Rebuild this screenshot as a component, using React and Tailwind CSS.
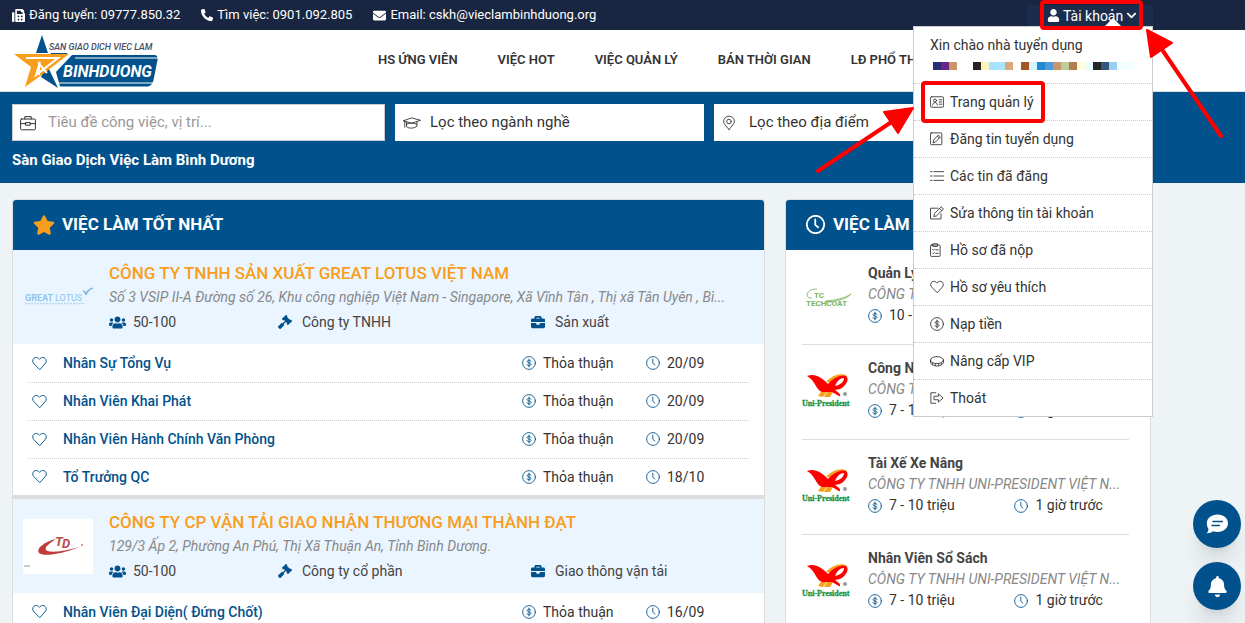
import { FaBell, FaBriefcase, FaChevronDown, FaEnvelope, FaFax, FaGavel, FaPhoneAlt, FaStar, FaUser, FaUsers } from 'react-icons/fa'

const nav = ['HS ứng viên', 'Việc hot', 'Việc quản lý', 'Bán thời gian', 'LĐ phổ thông']

const menu = [
  ['card', 'Trang quản lý'],
  ['penSquare', 'Đăng tin tuyển dụng'],
  ['list', 'Các tin đã đăng'],
  ['edit', 'Sửa thông tin tài khoản'],
  ['clipboard', 'Hồ sơ đã nộp'],
  ['heart', 'Hồ sơ yêu thích'],
  ['dollar', 'Nạp tiền'],
  ['ring', 'Nâng cấp VIP'],
  ['exit', 'Thoát'],
]

const companies = [
  {
    name: 'CÔNG TY TNHH SẢN XUẤT GREAT LOTUS VIỆT NAM',
    address: 'Số 3 VSIP II-A Đường số 26, Khu công nghiệp Việt Nam - Singapore, Xã Vĩnh Tân , Thị xã Tân Uyên , Bì...',
    size: '50-100',
    type: 'Công ty TNHH',
    field: 'Sản xuất',
    Logo: LotusLogo,
    jobs: [
      ['Nhân Sự Tổng Vụ', '20/09'],
      ['Nhân Viên Khai Phát', '20/09'],
      ['Nhân Viên Hành Chính Văn Phòng', '20/09'],
      ['Tổ Trưởng QC', '18/10'],
    ],
  },
  {
    name: 'CÔNG TY CP VẬN TẢI GIAO NHẬN THƯƠNG MẠI THÀNH ĐẠT',
    address: '129/3 Ấp 2, Phường An Phú, Thị Xã Thuận An, Tỉnh Bình Dương.',
    size: '50-100',
    type: 'Công ty cổ phần',
    field: 'Giao thông vận tải',
    Logo: ThanhDatLogo,
    jobs: [['Nhân Viên Đại Diện( Đứng Chốt)', '16/09']],
  },
]

const latest = [
  ['Quản Lý Sản Xuất', 'CÔNG TY TNHH TECHCOAT VIỆT NAM', '10 - 15 triệu', TechcoatLogo],
  ['Công Nhân Sản Xuất', 'CÔNG TY TNHH UNI-PRESIDENT VIỆT N...', '7 - 10 triệu', UniLogo],
  ['Tài Xế Xe Nâng', 'CÔNG TY TNHH UNI-PRESIDENT VIỆT N...', '7 - 10 triệu', UniLogo],
  ['Nhân Viên Sổ Sách', 'CÔNG TY TNHH UNI-PRESIDENT VIỆT N...', '7 - 10 triệu', UniLogo],
]

// hidden name under the greeting, 8px blocks
const mosaic = [
  '#2b2d77', '#6a2589', '#c89468', '#fff', '#fff', '#2a2222', '#fff3b8', '#a6e2fc', '#a6e6ff',
  '#dba87c', '#fff', '#a55522', '#d2f6ff', '#2388d4', '#4b9bdc', '#c89468', '#b8cf98', '#b07c50',
  '#ffffe0', '#e8ffff', '#222428', '#36557c', '#9bccf2', '#f2ffff', '#f2ffff',
]

export default function App() {
  return (
    <div className="relative h-screen overflow-hidden bg-[#eef3f6] font-[Roboto,sans-serif] text-sm text-[#333]">
      <TopBar />
      <Header />
      <SearchBand />
      <main className="grid grid-cols-[753fr_366fr] items-start gap-5 pt-4 pr-[94px] pl-3">
        <BestJobs />
        <LatestJobs />
      </main>
      <FloatingButtons />
      <Annotations />
    </div>
  )
}

function TopBar() {
  return (
    <div className="flex h-[30px] items-center bg-[#192641] pr-[92px] pl-3 text-[13px] text-white">
      <span className="flex items-center gap-1"><FaFax className="size-[13px]" />Đăng tuyển: 09777.850.32</span>
      <span className="ml-[21px] flex items-center gap-1"><FaPhoneAlt className="size-3" />Tìm việc: 0901.092.805</span>
      <span className="ml-[21px] flex items-center gap-1"><FaEnvelope className="size-[13px]" />Email: cskh@vieclambinhduong.org</span>
      <div className="relative ml-auto self-end">
        <button className="flex h-[25px] w-[126px] items-center gap-[3px] bg-[#1b2d4c] pb-1 pl-5 text-sm">
          <FaUser className="size-[13px]" />Tài khoản<FaChevronDown className="size-[11px]" />
        </button>
        <AccountMenu />
      </div>
    </div>
  )
}

function AccountMenu() {
  return (
    <div className="absolute top-[21px] right-0 z-20 w-[240px] border border-[#ccc] bg-white text-sm text-[#333]">
      <svg className="absolute -top-[9px] right-[30px] h-[9px] w-[18px]" viewBox="0 0 18 9">
        <path d="M0 9 9 0l9 9z" fill="#fff" />
      </svg>
      <div className="px-4 pt-2 pb-[13px]">
        <p className="leading-5">Xin chào nhà tuyển dụng</p>
        <div className="mt-[7px] flex pl-[3px]">
          {mosaic.map((c, i) => (
            <span key={i} className="size-2" style={{ background: c }} />
          ))}
        </div>
      </div>
      {menu.map(([icon, label]) => (
        <a key={label} href="#" className="flex h-[37px] items-center border-t border-dotted border-[#ccc] px-4">
          <span className="w-5"><Icon name={icon} className="size-[14px]" /></span>
          {label}
        </a>
      ))}
    </div>
  )
}

function Header() {
  return (
    <header className="flex h-[62px] items-center border-b border-[#ddd] bg-white pl-3">
      <a href="#" className="w-[366px] shrink-0"><SiteLogo /></a>
      <nav className="flex gap-10">
        {nav.map((n) => (
          <a key={n} href="#" className="text-[13px] font-semibold whitespace-nowrap uppercase">{n}</a>
        ))}
      </nav>
    </header>
  )
}

function SearchBand() {
  return (
    <section className="h-[91px] bg-[#01528c] pt-3 pr-[94px] pl-3">
      <div className="grid grid-cols-[373fr_309fr_437fr] gap-[10px]">
        <label className="flex h-[37px] items-center border border-[#ccc] bg-white pl-[7px]">
          <Icon name="briefcase" className="size-4 shrink-0" />
          <input
            aria-label="Tiêu đề công việc"
            placeholder="Tiêu đề công việc, vị trí..."
            className="ml-3 w-full text-[15px] outline-none placeholder:text-[#999]"
          />
        </label>
        <Filter icon="cap" label="Lọc theo ngành nghề" size="w-[18px]" />
        <Filter icon="pin" label="Lọc theo địa điểm" size="w-[14px]" />
      </div>
      <h1 className="mt-2 text-[15px] leading-[22px] font-bold text-white">Sàn Giao Dịch Việc Làm Bình Dương</h1>
    </section>
  )
}

function Filter({ icon, label, size }) {
  return (
    <label className="flex h-[37px] items-center bg-white pl-2">
      <span className="w-[27px]"><Icon name={icon} className={`h-4 ${size}`} /></span>
      <select aria-label={label} className="w-[180px] appearance-none text-[15px] outline-none">
        <option>{label}</option>
      </select>
    </label>
  )
}

function CardTitle({ icon, children }) {
  return (
    <div className="flex h-[50px] items-center bg-[#01528c] pb-px pl-5 text-[17px] font-bold text-white">
      {icon}
      <h2>{children}</h2>
    </div>
  )
}

function BestJobs() {
  return (
    <section className="overflow-hidden rounded-t border border-[#ddd] bg-white">
      <CardTitle icon={<FaStar className="mr-[7px] size-[22px] text-[#f99d1c]" />}>VIỆC LÀM TỐT NHẤT</CardTitle>
      {companies.map((c) => (
        <article key={c.name} className="border-b-4 border-[#ddd]">
          <div className="flex items-center gap-4 bg-[#eaf5ff] pt-[11px] pr-4 pb-[10px] pl-[10px]">
            <c.Logo />
            <div className="min-w-0 flex-1">
              <a href="#" className="block truncate text-[17px] leading-6 font-medium text-[#f99d1c]">{c.name}</a>
              <p className="truncate leading-[25px] text-[#888] italic">{c.address}</p>
              <div className="grid grid-cols-[169fr_253fr_217fr] leading-6 text-[#444]">
                <Meta icon={<FaUsers className="size-[17px]" />}>{c.size}</Meta>
                <Meta icon={<FaGavel className="size-[14px]" />}>{c.type}</Meta>
                <Meta icon={<FaBriefcase className="size-[14px]" />}>{c.field}</Meta>
              </div>
            </div>
          </div>
          <ul className="mx-[15px] pt-px">
            {c.jobs.map(([title, date]) => (
              <li key={title} className="flex h-[38px] items-center border-b border-dotted border-[#ccc] pb-px pl-1 last:h-9 last:border-0">
                <button aria-label="Lưu việc làm" className="w-[31px] text-[#01528c]"><Icon name="heart" className="size-[15px]" /></button>
                <a href="#" className="flex-1 font-medium text-[#01528c]">{title}</a>
                <span className="flex w-[124px] items-center gap-[7px]"><Icon name="dollar" className="size-[14px] text-[#01528c]" />Thỏa thuận</span>
                <span className="flex w-[103px] items-center gap-[7px]"><Icon name="clock" className="size-[14px] text-[#01528c]" />{date}</span>
              </li>
            ))}
          </ul>
        </article>
      ))}
    </section>
  )
}

function Meta({ icon, children }) {
  return (
    <span className="flex items-center">
      <span className="w-6 text-[#01528c]">{icon}</span>
      {children}
    </span>
  )
}

function LatestJobs() {
  return (
    <section className="overflow-hidden rounded-t border border-[#ddd] bg-white">
      <CardTitle icon={<Icon name="clock" className="mr-2 size-[19px]" bold />}>VIỆC LÀM MỚI NHẤT</CardTitle>
      <ul className="pr-[21px] pl-4">
        {latest.map(([title, company, pay, Logo]) => (
          <li key={title} className="flex h-[95px] items-center gap-4 border-b border-[#ddd]">
            <Logo />
            <div className="min-w-0 flex-1 pb-[5px] leading-[21px]">
              <a href="#" className="block font-bold text-[#444]">{title}</a>
              <p className="truncate text-[#888] italic">{company}</p>
              <div className="grid grid-cols-[147fr_115fr]">
                <span className="flex items-center gap-[7px]"><Icon name="dollar" className="size-[14px] text-[#01528c]" />{pay}</span>
                <span className="flex items-center gap-[7px]"><Icon name="clock" className="size-[14px] text-[#01528c]" />1 giờ trước</span>
              </div>
            </div>
          </li>
        ))}
      </ul>
    </section>
  )
}

function FloatingButtons() {
  return (
    <div className="fixed right-1 bottom-[13px] flex flex-col gap-[14px] text-white">
      <button aria-label="Trò chuyện" className="flex size-12 items-center justify-center rounded-full bg-[#01528c] shadow-xl">
        <svg viewBox="0 0 22 20" className="h-5 w-[22px]">
          <path d="M11.500.5C17.500.5 22 4 22 9.300S17.500 18 11.500 18c-1.500 0-3-.2-4.300-.7C5.500 18.600 3.300 19.300.6 19.200c1.200-1.200 1.800-2.700 1.900-4.200C1.400 13.500.8 11.500.8 9.300.8 4 5.500.5 11.500.5z" fill="currentColor" />
          <path d="M7 7.500h9.500M6 11.500h7.500" stroke="#01528c" strokeWidth="1.300" strokeLinecap="round" />
        </svg>
      </button>
      <button aria-label="Thông báo" className="flex size-12 items-center justify-center rounded-full bg-[#01528c] shadow-xl">
        <FaBell className="size-[21px]" />
      </button>
    </div>
  )
}

// Red frames and arrows of the how-to guide
function Annotations() {
  return (
    <div className="pointer-events-none absolute inset-y-0 right-0 z-30 w-[445px]">
      <div className="absolute top-0 left-[240px] h-[30px] w-[103px] rounded-sm border-4 border-[#f00]" />
      <div className="absolute top-[81px] left-[121px] h-[42px] w-[124px] rounded-sm border-4 border-[#f00]" />
      <svg className="absolute top-0 left-0 h-[180px] w-[445px]" viewBox="800 0 445 180">
        <g stroke="#f00" strokeWidth="4" strokeLinecap="round" fill="#f00">
          <path d="M818 171 890 123M1221 136l-58-85" />
          <path d="M913 108l-29 4 14 21zM1147 30l25 13-21 14z" strokeWidth="2" strokeLinejoin="round" />
        </g>
      </svg>
    </div>
  )
}

const shapes = {
  heart: <path d="M8 14.300 2 8.200C.3 6.400.4 3.900 2 2.500c1.600-1.400 4-1.200 5.200.2L8 3.600l.8-.9C10 1.300 12.400 1.100 14 2.500c1.600 1.400 1.700 3.900 0 5.700z" />,
  dollar: (
    <>
      <circle cx="8" cy="8" r="7.300" />
      <path d="M10.200 6.200C10 5.300 9.200 4.900 8 4.900c-1.300 0-2.200.6-2.200 1.500C5.800 8.600 10.300 7.300 10.300 9.600c0 .9-.9 1.500-2.300 1.500-1.300 0-2.100-.5-2.300-1.400M8 3.600v8.800" />
    </>
  ),
  clock: (
    <>
      <circle cx="8" cy="8" r="7.300" />
      <path d="M7.800 3.600v4.700l2.400 2" />
    </>
  ),
  briefcase: (
    <>
      <rect x=".6" y="4" width="14.800" height="10.800" rx="1" />
      <path d="M4.800 4V1.600h6.400V4M.6 8.600h5.200m4.400 0h5.200M5.800 7.600h4.400v2.600H5.800z" />
    </>
  ),
  cap: <path d="M.5 5.500 9.500 2.300l10 2.700-9.500 3zM4 7v5.200c2.500 2.300 9 1.800 11.500-.7V6.600M4 9.200c3-1.400 8-1.500 11.500.2M2 6.200v6.500" />,
  pin: (
    <>
      <path d="M8 15.500C4.500 11 1.800 8.900 1.800 6.400a6.200 6.200 0 0 1 12.400 0c0 2.500-2.700 4.600-6.200 9.100z" />
      <circle cx="8" cy="6.300" r="2.600" />
    </>
  ),
  card: (
    <>
      <rect x=".5" y="2" width="15" height="12" rx="1.500" />
      <circle cx="5.700" cy="6.300" r="1.700" />
      <path d="M3 11.500c.2-2 1.200-2.800 2.700-2.800s2.500.8 2.700 2.800M10.500 5.500h3M10.500 8h3M10.500 10.500h3" />
    </>
  ),
  penSquare: (
    <>
      <rect x=".5" y="1" width="13" height="13.500" rx="1" />
      <path d="m3.500 12 .8-3L9.500 3.500l2.300 2.200-5.300 5.500zM8.500 4.800l2.200 2.200" />
    </>
  ),
  list: <path d="M4.500 3H16M4.500 8H16M4.500 13H16M.3 3h2M.3 8h2M.3 13h2" />,
  edit: (
    <>
      <path d="M9 2.500H.6v12.300h12V9" />
      <path d="m4.500 11.700.7-3.200L12.800.9l2.600 2.500-7.700 7.600zM11 2.800l2.500 2.500" />
    </>
  ),
  clipboard: (
    <>
      <rect x=".6" y="2.300" width="11" height="13" rx="1" />
      <path d="M3.600.9h5v3h-5zM3 7.500l.8.800L5 7M6.500 7.800h3M3 11.500l.8.800L5 11M6.500 11.800h3" />
    </>
  ),
  ring: (
    <>
      <ellipse cx="8" cy="7" rx="7.400" ry="4" />
      <path d="M.6 7v2.500c0 2 3 4.200 7.400 4.200s7.400-2.200 7.400-4.200V7M3 10v2M6 11v2.300M10 11v2.300M13 10v2" />
    </>
  ),
  exit: (
    <>
      <path d="M6.500 2H1v12h5.500" />
      <path d="M5 6h4.500V3.200L15 8l-5.500 4.800V10H5z" />
    </>
  ),
}

function Icon({ name, className, bold }) {
  return (
    <svg viewBox={name === 'cap' ? '0 0 20 16' : '0 0 16 16'} className={className} fill="none" stroke="currentColor" strokeWidth={bold ? 1.5 : 1} strokeLinejoin="round" strokeLinecap="round">
      {shapes[name]}
    </svg>
  )
}

function SiteLogo() {
  return (
    <svg viewBox="0 0 150 56" className="h-14 w-[150px]">
      <path d="M30 2 36 20H24zM36 34l20-14H39L29 44l17 11z" fill="#01528c" />
      <path d="M60 22h82c3 0 4 2 3.500 5l-4 20c-1 4-3 6.500-7 6.500H48L44 39z" fill="#01528c" />
      <path d="M63 25h83M47 50h94" stroke="#fff" strokeWidth="1" />
      <path d="M2 21h55L31 41 13 54l6-20z" fill="#f99d1c" />
      <path d="M14 25h32L24 42l4-13M27 42V31l8 9" fill="none" stroke="#fff" strokeWidth="2" />
      <text x="37" y="17" fontSize="9" fontWeight="500" fontStyle="italic" fill="#444c66">SAN GIAO DICH VIEC LAM</text>
      <text x="51" y="44" fontSize="16" fontWeight="700" fontStyle="italic" fill="#fff">BINHDUONG</text>
    </svg>
  )
}

function LotusLogo() {
  return (
    <svg viewBox="0 0 70 55" className="h-[55px] w-[70px]">
      <text x="2" y="31" fontSize="9" fontWeight="700" fill="#8fc5ea">GREAT</text>
      <text x="32" y="31" fontSize="9" fill="#8fc5ea">LOTUS</text>
      <path d="M2 33.500h60" stroke="#b5daf2" strokeWidth="1.500" strokeDasharray="2 1" />
      <path d="M60 21c2 1 2 2 3 4 1-3 4-6 7-7-4 1-6 3-7 5-1-1-1-2-3-2z" fill="#6fb3e0" stroke="#6fb3e0" />
    </svg>
  )
}

function ThanhDatLogo() {
  return (
    <svg viewBox="0 0 70 55" className="h-[55px] w-[70px] bg-white">
      <path d="M33 20C20 23 13 30 16 34c4 4 24 1 40-6-16 5-31 6-33 3-2-3 4-7 10-11z" fill="#c0393c" />
      <text x="32" y="27" fontSize="13" fontWeight="700" fontStyle="italic" fill="#b9494d">T</text>
      <text x="39" y="29" fontSize="13" fontWeight="700" fontStyle="italic" fill="#b9494d">D</text>
      <circle cx="59" cy="26" r="1" fill="#c77" />
      <path d="M1 47h6" stroke="#999" />
    </svg>
  )
}

function TechcoatLogo() {
  return (
    <svg viewBox="0 0 50 44" className="h-11 w-[50px] shrink-0">
      <path d="M15 14C8 14 5 17 5 20c0 2 2 3 5 3M24 26c8-1 18-2 25-7-5 5-12 7-25 8z" fill="none" stroke="#8cbf72" strokeWidth="1" />
      <text x="12" y="23" fontSize="8" fontWeight="700" fill="#7bb35f">TC</text>
      <text x="4" y="31" fontSize="8" fontWeight="700" fill="#7bb35f">TECHCOAT</text>
    </svg>
  )
}

function UniLogo() {
  return (
    <svg viewBox="0 0 50 44" className="h-11 w-[50px] shrink-0">
      <path d="M16 26l5-7 4 2-4 6zM22 27l4-7 5 2-3 5zM24 12C30 5 40 2 45 6l-9 7z" fill="#f9a01b" />
      <path d="M5 6c8-3 14 1 21 8C31 8 39 4 44 6c4 3 0 10-6 13l-5 1 4 3c2 2 1 4 0 3l-7-4H20C13 19 14 11 5 6z" fill="#f00" />
      <path d="M42 8c-4 0-7 3-9 8 5-1 9-4 9-8z" fill="#fff" />
      <circle cx="43" cy="24" r="2" fill="#999" />
      <text x="0" y="36" fontSize="8" fontWeight="700" fontFamily="Liberation Serif, serif" fill="#159447" stroke="#159447" strokeWidth=".3">Uni-President</text>
    </svg>
  )
}
